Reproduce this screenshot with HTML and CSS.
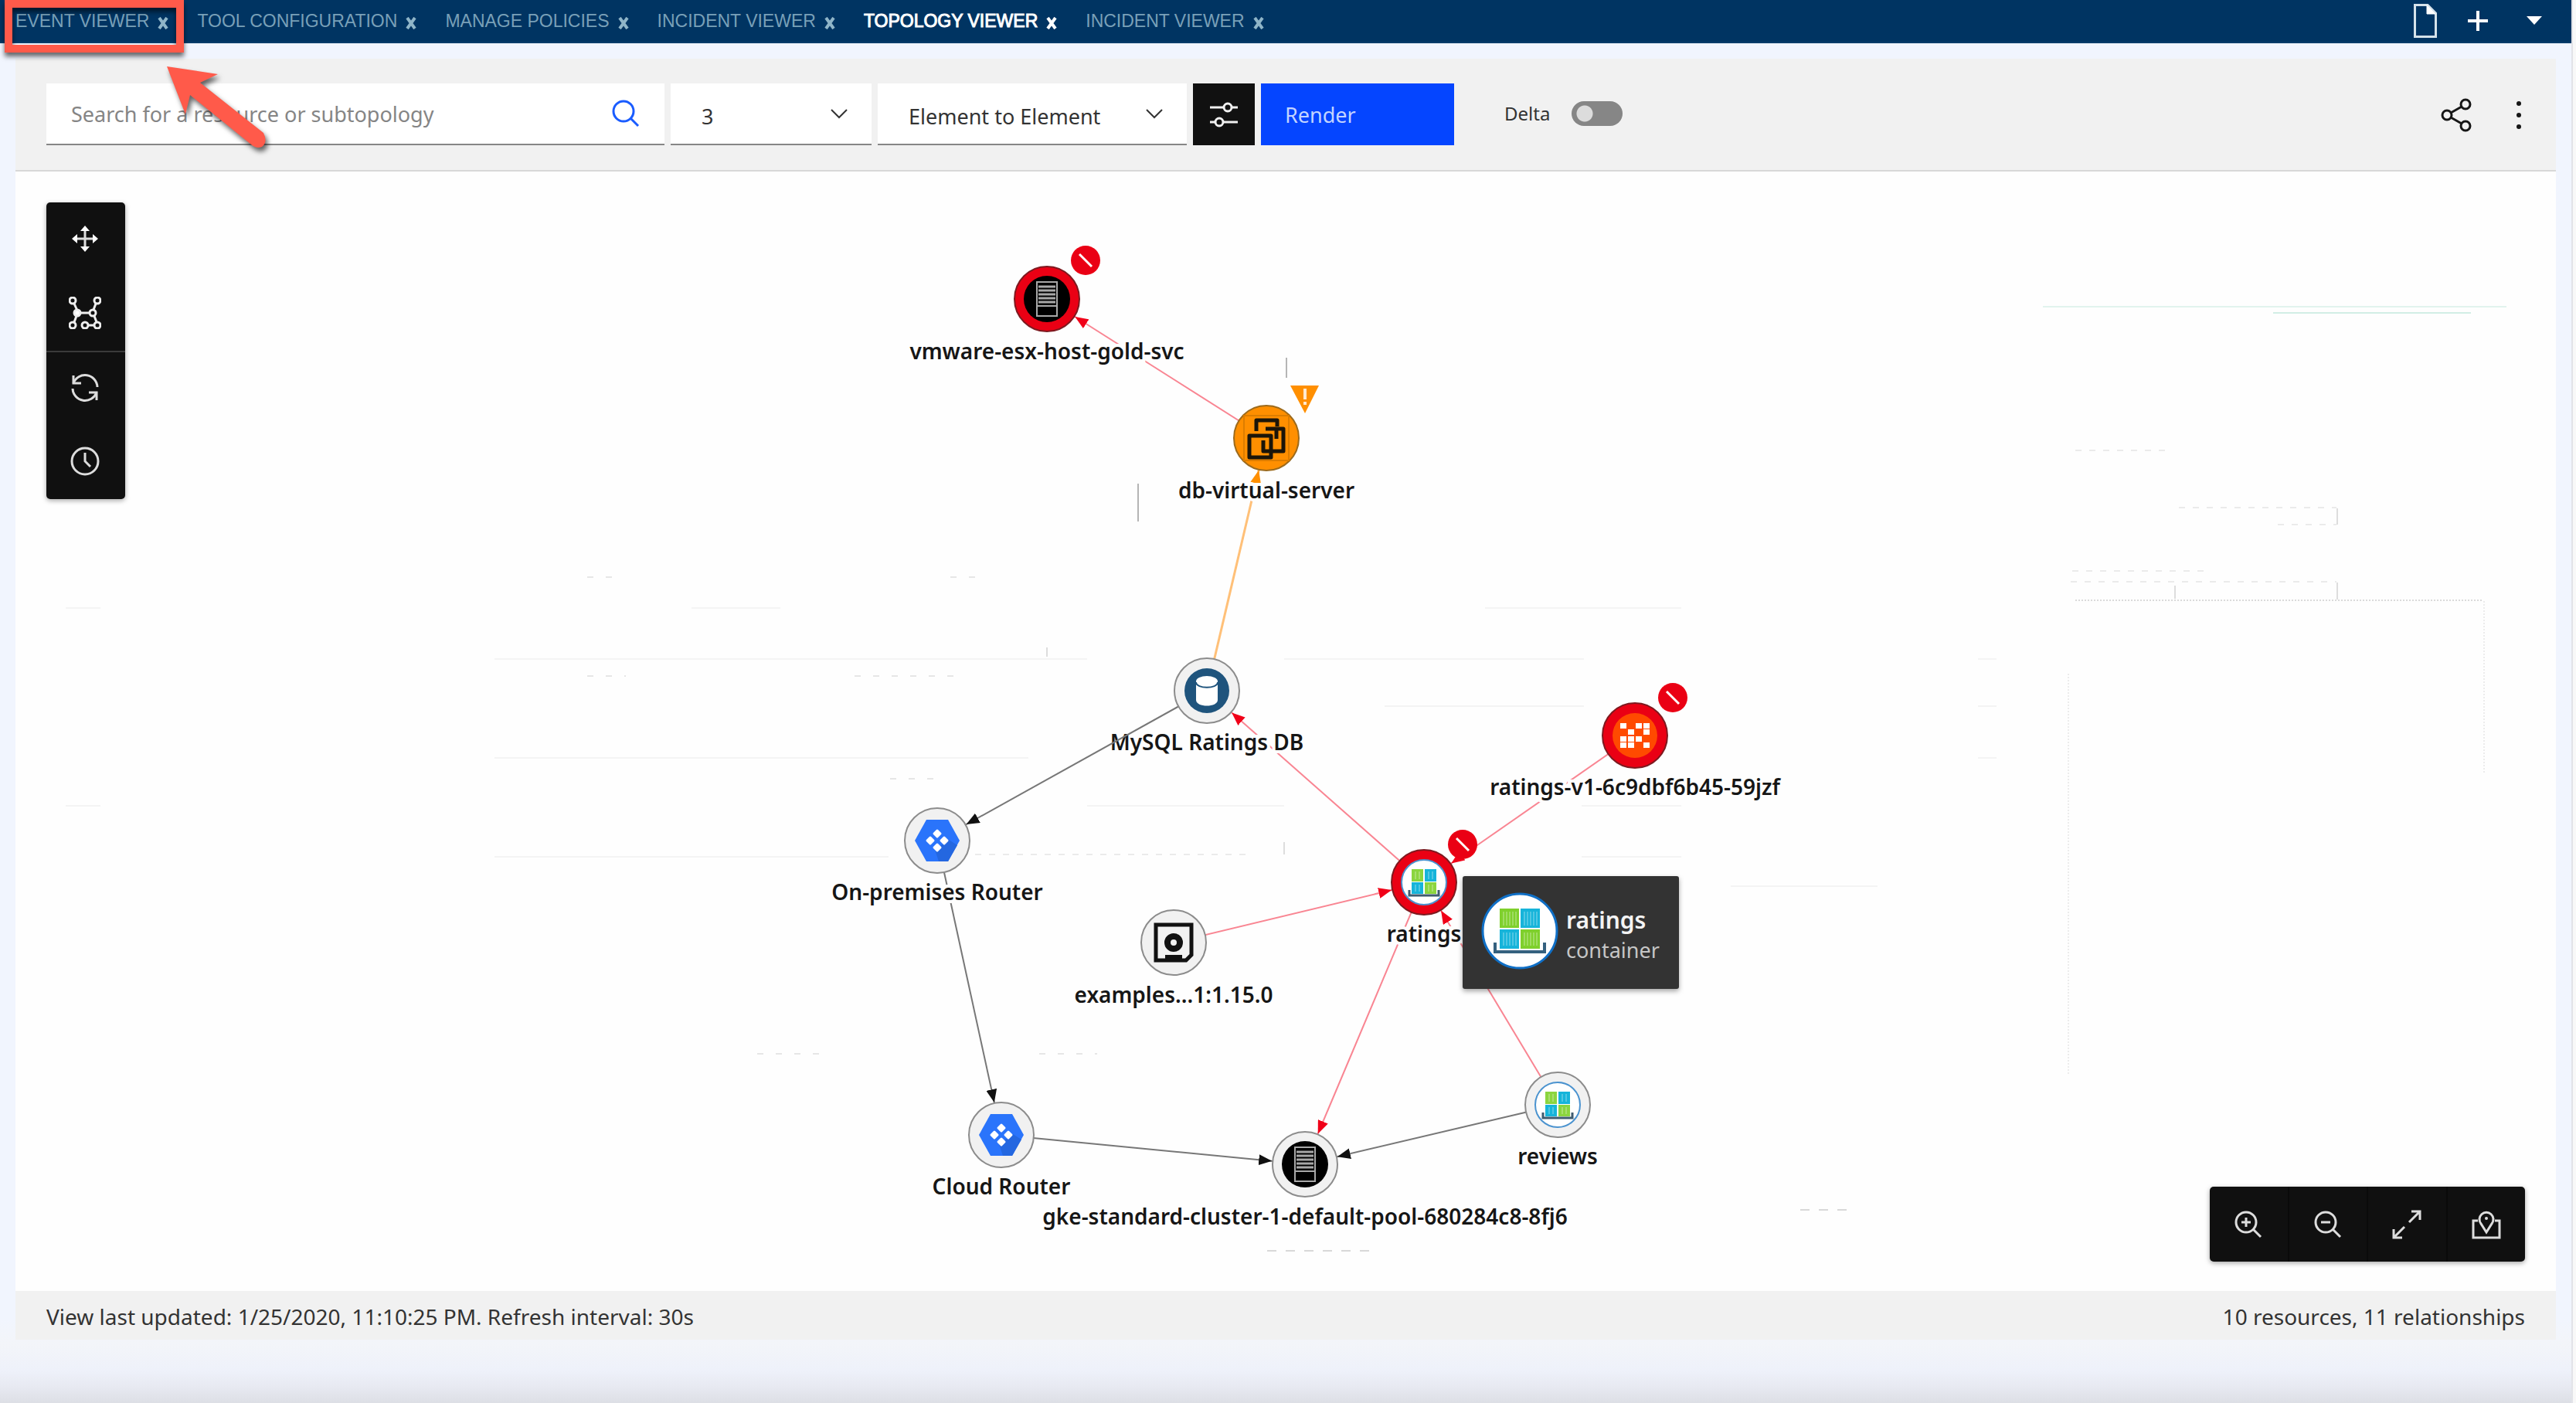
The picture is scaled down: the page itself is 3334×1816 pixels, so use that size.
FILE: index.html
```html
<!DOCTYPE html>
<html lang="en">
<head>
<meta charset="utf-8">
<title>Topology Viewer</title>
<link rel="stylesheet" href="styles.css">
</head>
<body>
<div class="app">
  <header class="topbar">
    <nav class="tabs" aria-label="Open pages">
      <div class="tab"><a href="#">EVENT VIEWER</a><button type="button" aria-label="Close"><svg class="x"><use href="#i-x"/></svg></button></div>
      <div class="tab"><a href="#">TOOL CONFIGURATION</a><button type="button" aria-label="Close"><svg class="x"><use href="#i-x"/></svg></button></div>
      <div class="tab"><a href="#">MANAGE POLICIES</a><button type="button" aria-label="Close"><svg class="x"><use href="#i-x"/></svg></button></div>
      <div class="tab"><a href="#">INCIDENT VIEWER</a><button type="button" aria-label="Close"><svg class="x"><use href="#i-x"/></svg></button></div>
      <div class="tab active"><a href="#">TOPOLOGY VIEWER</a><button type="button" aria-label="Close"><svg class="x"><use href="#i-x"/></svg></button></div>
      <div class="tab"><a href="#">INCIDENT VIEWER</a><button type="button" aria-label="Close"><svg class="x"><use href="#i-x"/></svg></button></div>
    </nav>
    <div class="top-actions">
      <button type="button" aria-label="New page"><svg width="30" height="44" viewBox="0 0 30 44" fill="none" stroke="#d5e2ea" stroke-width="3"><path d="M1.500 1.500H18L28.500 12V42.500H1.500Z"/><path d="M17 2V13H28Z" fill="#fff" stroke="#fff" stroke-width="1"/></svg></button>
      <button type="button" aria-label="Add"><svg width="26" height="26" viewBox="0 0 26 26" stroke="#fff" stroke-width="4"><path d="M13 0V26M0 13H26"/></svg></button>
      <button type="button" class="menu" aria-label="Menu"><svg width="20" height="12" viewBox="0 0 20 12"><path d="M0 0H20L10 11Z" fill="#fff"/></svg></button>
    </div>
  </header>

  <main class="panel">
    <form class="toolbar">
      <div class="search">
        <input type="text" aria-label="Search" placeholder="Search for a resource or subtopology">
        <svg width="36" height="36" viewBox="0 0 36 36" fill="none" stroke="#1a5cff" stroke-width="3"><circle cx="15" cy="15" r="13"/><path d="M24 24L34 34"/></svg>
      </div>
      <div class="select hops"><select aria-label="Hops"><option>3</option></select><svg class="chev"><use href="#i-chev"/></svg></div>
      <div class="select mode"><select aria-label="Mode"><option>Element to Element</option></select><svg class="chev"><use href="#i-chev"/></svg></div>
      <button type="button" class="filter" aria-label="Filters"><svg width="38" height="36" viewBox="0 0 38 36" fill="none" stroke="#f0f0f0" stroke-width="3"><path d="M1 9H19M30 9H37M1 28H8M19 28H37"/><circle cx="24" cy="9" r="5"/><circle cx="13" cy="28" r="5"/></svg></button>
      <button type="button" class="render">Render</button>
      <label class="delta">Delta <input type="checkbox"></label>
      <div class="tool-right">
        <button type="button" aria-label="Share"><svg width="40" height="44" viewBox="0 0 40 44" fill="none" stroke="#161616" stroke-width="3"><circle cx="32" cy="8" r="6"/><circle cx="8" cy="22" r="6"/><circle cx="32" cy="36" r="6"/><path d="M13 19L27 11M13 25L27 33"/></svg></button>
        <button type="button" aria-label="More"><svg width="8" height="38" viewBox="0 0 8 38" fill="#161616"><circle cx="4" cy="4" r="3"/><circle cx="4" cy="19" r="3"/><circle cx="4" cy="34" r="3"/></svg></button>
      </div>
    </form>

    <section class="canvas">
      <svg class="graph" viewBox="20 222 3288 1447">
        <defs>
          <symbol id="i-x" viewBox="0 0 16 16"><path d="M3 1L13 15M13 1L3 15" fill="none" stroke="currentColor" stroke-width="4"/></symbol>
          <symbol id="i-chev" viewBox="0 0 22 14"><path d="M1 2L11 12L21 2" fill="none" stroke="#333" stroke-width="2"/></symbol>
          <marker id="m-red" markerUnits="userSpaceOnUse" markerWidth="18" markerHeight="14" refX="60" refY="7" orient="auto"><path d="M0 0L17 7L0 14Z" fill="#f00018"/></marker>
          <marker id="m-dark" markerUnits="userSpaceOnUse" markerWidth="18" markerHeight="14" refX="60" refY="7" orient="auto"><path d="M0 0L17 7L0 14Z" fill="#111"/></marker>
          <marker id="m-orange" markerUnits="userSpaceOnUse" markerWidth="18" markerHeight="14" refX="60" refY="7" orient="auto"><path d="M0 0L17 7L0 14Z" fill="#ff8f00"/></marker>
          <g id="server"><circle r="30" fill="#000"/><g fill="none" stroke="#a8a8a8"><rect x="-13" y="-22" width="26" height="44" stroke-width="2"/><path d="M-11 -16H11M-11 -11H11M-11 -6H11M-11 -1H11M-11 4H11" stroke-width="3"/><path d="M-12 9H12" stroke-width="2"/></g></g>
          <g id="router"><path d="M-29 0L-14 -27H14L29 0L14 27H-14Z" fill="#2a74fb"/><path d="M15 -1L26 6L14 27H2L-3 12Z" fill="#2467e0"/><path d="M0 -13L4 -9L0 -5L-4 -9ZM0 13L4 9L0 5L-4 9ZM-13 0L-9 -4L-5 0L-9 4ZM13 0L9 -4L5 0L9 4Z" fill="#fff" stroke="#fff" stroke-width="3" stroke-linejoin="round"/></g>
          <g id="container"><circle r="29" fill="#fff" stroke="#4b93cf" stroke-width="2"/><path d="M-16 -17H-1V-1H-16ZM1 0H16V15H1Z" fill="#8bd53f"/><path d="M1 -17H16V-1H1ZM-16 0H-1V15H-16Z" fill="#16b4da"/><path d="M-11 -14V-4M-6 -14V-4M6 -14V-4M11 -14V-4M-11 3V12M-6 3V12M6 3V12M11 3V12" stroke="#fff" stroke-opacity=".5"/><path d="M-19 10V17H19V10" fill="none" stroke="#3f5c70" stroke-width="3"/></g>
          <g id="badge"><circle r="19" fill="#ea0014"/><path d="M-8 -8L8 8" stroke="#fff" stroke-width="3"/></g>
        </defs>

        <g class="traces">
          <path d="M2644 397H3244" stroke="#e2f4ee"/><path d="M2942 405H3198" stroke="#d2eee5"/>
          <path d="M2686 777H3212" stroke="#dadada" stroke-dasharray="2 2"/>
          <path d="M3215 778V1000M2677 872V1390" stroke="#ececec" stroke-dasharray="2 2"/>
          <path d="M2686 583H2810M2820 657H3024M2948 679H3024M2682 739H2860M2680 753H3024M1190 1106H1620" stroke="#ebebeb" stroke-dasharray="8 10"/>
          <path d="M3025 658V679M3025 754V776M2815 758V775M1355 838V850M1662 1090V1106" stroke="#ddd"/>
          <path d="M1665 463V489M1473 626V675" stroke="#b5b5b5"/>
          <path d="M640 853H1407M1662 853H2050M895 787H1010M1792 914H2050M1922 787H2176M640 981H1331M1407 1043H1662M640 1109H1150M85 787H130M85 1043H130M2047 1043H2176M2047 1109H2176M2560 853H2584M2560 914H2584M2560 981H2584M2240 1147H2430" stroke="#f4f4f4"/>
          <path d="M1640 1619H1775M2330 1566H2390" stroke="#d8d8d8" stroke-dasharray="12 12"/>
          <path d="M1345 1364H1420M980 1364H1060M760 747H800M1106 875H1240M1152 1008H1210M760 875H810M1230 747H1270" stroke="#e6e6e6" stroke-dasharray="8 16"/>
        </g>

        <g class="edges">
          <path class="red" d="M1639 567L1355 387"/>
          <path class="orange" d="M1562 894L1639 567"/>
          <path class="red" d="M1843 1142L1562 894"/>
          <path class="red" d="M2116 952L1843 1142"/>
          <path class="red" d="M1519 1220L1843 1142"/>
          <path class="red" d="M1843 1142L1689 1507"/>
          <path class="red" d="M2016 1430L1843 1142"/>
          <path class="dark" d="M1213 1088L1296 1469"/>
          <path class="dark" d="M1296 1469L1689 1507"/>
          <path class="dark" d="M2016 1430L1689 1507"/>
        </g>

        <g class="labels">
          <text x="1355" y="465">vmware-esx-host-gold-svc</text>
          <text x="1639" y="645">db-virtual-server</text>
          <text x="1562" y="971">MySQL Ratings DB</text>
          <text x="1213" y="1165">On-premises Router</text>
          <text x="1519" y="1298">examples...1:1.15.0</text>
          <text x="2116" y="1029">ratings-v1-6c9dbf6b45-59jzf</text>
          <text x="1843" y="1219">ratings</text>
          <text x="1296" y="1546">Cloud Router</text>
          <text x="1689" y="1585">gke-standard-cluster-1-default-pool-680284c8-8fj6</text>
          <text x="2016" y="1507">reviews</text>
        </g>
        <g class="edges"><path class="dark" d="M1562 894L1213 1088"/></g>

        <g class="nodes">
          <g transform="translate(1355 387)"><circle class="ring critical" r="42"/><use href="#server"/></g>
          <use href="#badge" x="1405" y="337"/>
          <g transform="translate(1639 567)"><circle class="ring warning" r="42"/><path d="M-29 -30V30M29 -30V30M-30 -29H30M-30 29H30" stroke="#dd7d00" stroke-width="2"/><g fill="none" stroke="#1b1509" stroke-width="5" stroke-linejoin="round"><path d="M-13 -9V-23H14V-15M-1 -12H22V17H-4V3M13 -11V1M-22 -3H6V25H-22Z"/></g></g>
          <path d="M1670 499H1707L1689 535Z" fill="#ff8f00"/><path d="M1689 503V517M1689 520V524" stroke="#ffe9cf" stroke-width="4"/>
          <g transform="translate(1562 894)"><circle class="ring" r="42"/><circle r="29" fill="#1f547d"/><path d="M-14 -12V12C-14 22 14 22 14 12V-12" fill="#fff"/><ellipse cy="-12" rx="14" ry="7" fill="#fff"/><path d="M-14 -11C-14 -2 14 -2 14 -11" fill="none" stroke="#1f547d" stroke-width="2"/></g>
          <g transform="translate(1213 1088)"><circle class="ring" r="42"/><use href="#router"/></g>
          <g transform="translate(1519 1220)"><circle class="ring" r="42"/><path d="M-23 -23H23V16L16 23H-23Z" fill="none" stroke="#111" stroke-width="5"/><path d="M-11 16H11V22H-11Z" fill="#111"/><circle r="8" fill="none" stroke="#111" stroke-width="8"/></g>
          <g transform="translate(2116 952)"><circle class="ring critical" r="42"/><circle r="29" fill="#ff4a00"/><path d="M-19 -16h8v7h-8zM1 -16h8v7h-8zM11 -16h8v7h-8zM-9 -8h8v7h-8zM11 -8h8v7h-8zM-19 1h8v7h-8zM-9 1h8v7h-8zM1 1h8v7h-8zM-19 9h8v7h-8zM-9 9h8v7h-8zM11 9h8v7h-8z" fill="#fff"/></g>
          <use href="#badge" x="2165" y="903"/>
          <g transform="translate(1843 1142)"><circle class="ring critical" r="42"/><use href="#container"/></g>
          <use href="#badge" x="1893" y="1093"/>
          <g transform="translate(1296 1469)"><circle class="ring" r="42"/><use href="#router"/></g>
          <g transform="translate(1689 1507)"><circle class="ring" r="42"/><use href="#server"/></g>
          <g transform="translate(2016 1430)"><circle class="ring" r="42"/><use href="#container"/></g>
        </g>

        <g class="tip">
          <rect x="1893" y="1134" width="280" height="146" rx="3"/>
          <g transform="translate(1967 1205)"><circle r="48" fill="#fff" stroke="#0f6fc6" stroke-width="3"/><path d="M-26 -29H-1V-4H-26ZM1 -2H26V23H1Z" fill="#7fd02c"/><path d="M1 -29H26V-4H1ZM-26 -2H-1V23H-26Z" fill="#16b4da"/><path d="M-21 -25V-7M-17 -25V-7M-13 -25V-7M-9 -25V-7M-5 -25V-7M6 -25V-7M10 -25V-7M14 -25V-7M18 -25V-7M22 -25V-7M-21 2V19M-17 2V19M-13 2V19M-9 2V19M-5 2V19M6 2V19M10 2V19M14 2V19M18 2V19M22 2V19" stroke="#fff" stroke-opacity=".5"/><path d="M-32 15V27H32V15" fill="none" stroke="#35617f" stroke-width="4"/></g>
          <text class="tip-name" x="2027" y="1202">ratings</text>
          <text class="tip-kind" x="2027" y="1240">container</text>
        </g>
      </svg>

      <div class="side-tools">
        <button type="button" aria-label="Move"><svg width="36" height="36" viewBox="0 0 36 36" fill="#fff" stroke="#ddd" stroke-width="3"><path d="M18 4V32M4 18H32"/><path d="M18 1L24 8H12ZM18 35L24 28H12ZM1 18L8 12V24ZM35 18L28 12V24Z" stroke="none"/></svg></button>
        <button type="button" aria-label="Layout"><svg width="42" height="42" viewBox="0 0 42 42" fill="none" stroke="#eee" stroke-width="3"><circle cx="5" cy="5" r="4"/><circle cx="37" cy="5" r="4"/><circle cx="5" cy="37" r="4"/><circle cx="21" cy="37" r="4"/><circle cx="37" cy="37" r="4"/><circle cx="31" cy="21" r="4"/><circle cx="11" cy="21" r="4" fill="#fff"/><path d="M7 9L11 18M35 9L32 17M10 25L7 33M33 25L36 33M15 21H27M25 37H33"/></svg></button>
        <button type="button" class="ruled" aria-label="Refresh"><svg width="36" height="36" viewBox="0 0 36 36" fill="none" stroke="#ddd" stroke-width="3"><path d="M3 12A16 16 0 0 1 34 17M33 24A16 16 0 0 1 2 19"/><path d="M3 2V12H13M33 34V24H23"/></svg></button>
        <button type="button" aria-label="History"><svg width="38" height="38" viewBox="0 0 38 38" fill="none" stroke="#ddd" stroke-width="3"><circle cx="19" cy="19" r="17"/><path d="M19 8V19L26 26"/></svg></button>
      </div>

      <div class="zoom-tools">
        <button type="button" aria-label="Zoom in"><svg width="36" height="36" viewBox="0 0 36 36" fill="none" stroke="#ddd" stroke-width="3"><circle cx="15" cy="15" r="13"/><path d="M24 24L34 34M15 9V21M9 15H21"/></svg></button>
        <button type="button" aria-label="Zoom out"><svg width="36" height="36" viewBox="0 0 36 36" fill="none" stroke="#ddd" stroke-width="3"><circle cx="15" cy="15" r="13"/><path d="M24 24L34 34M9 15H21"/></svg></button>
        <button type="button" aria-label="Fit"><svg width="38" height="38" viewBox="0 0 38 38" fill="none" stroke="#ddd" stroke-width="3"><path d="M25 2H36V13M36 2L22 16M13 36H2V25M2 36L16 22"/></svg></button>
        <button type="button" aria-label="Mini map"><svg width="38" height="38" viewBox="0 0 38 38" fill="none" stroke="#ddd" stroke-width="3"><path d="M8 14H2V36H36V14H30"/><path d="M19 29L12 18A9 9 0 1 1 26 18Z"/><circle cx="19" cy="11" r="2" fill="#ddd" stroke="none"/></svg></button>
      </div>
    </section>

    <footer class="status"><span>View last updated: 1/25/2020, 11:10:25 PM. Refresh interval: 30s</span><span>10 resources, 11 relationships</span></footer>
  </main>
</div>

<div class="callout"></div>
<svg class="pointer" width="150" height="124" viewBox="0 0 150 124"><path d="M8 6L74 16L51 27L133 92Q139 104 131 110Q124 113 117 107L38 43L32 68Z" fill="#ff5a4a"/></svg>
</body>
</html>
```
FILE: styles.css
```css
* { box-sizing: border-box; }
body {
  margin: 0;
  background: #f8f8f8;
  color: #161616;
  font-family: "Noto Sans", sans-serif;
  font-size: 27px;
}
button {
  display: flex;
  align-items: center;
  justify-content: center;
  padding: 0;
  border: 0;
  background: none;
  font: inherit;
}
svg { display: block; flex: none; }

.app {
  display: flex;
  flex-direction: column;
  min-height: 100vh;
  margin-right: 4px;
  border-right: 2px solid #e2e3e8;
  padding-bottom: 82px;
  background: linear-gradient(to top, #dddfe5 0, #e7e9f1 20px, #eef1fa 42px, #f3f5f9 76px, #f1f5fe 110px);
}

.topbar {
  display: flex;
  justify-content: space-between;
  align-items: center;
  height: 56px;
  padding: 0 38px 0 20px;
  background: #003462;
  border-bottom: 2px solid #063d6a;
}
.tabs { display: flex; gap: 36px; }
.tab {
  display: flex;
  align-items: center;
  gap: 10px;
  color: #79a0b8;
  font-family: "Liberation Sans", Arial, sans-serif;
  font-size: 23px;
}
.tab a { color: inherit; text-decoration: none; }
.tab button { color: #8fb5c8; padding-top: 6px; }
.tab.active, .tab.active button { color: #fff; }
.tab.active a { -webkit-text-stroke: 1px #fff; }
.x { width: 16px; height: 16px; }
.top-actions { display: flex; align-items: center; gap: 40px; }
.menu { margin-left: 10px; }

.panel {
  flex: 1;
  display: flex;
  flex-direction: column;
  margin: 20px 20px 0;
}
.toolbar {
  display: flex;
  align-items: center;
  gap: 8px;
  height: 146px;
  padding: 0 40px;
  background: #f1f1f1;
  border-bottom: 2px solid #d8d8d8;
}
.search, .select {
  position: relative;
  display: flex;
  align-items: center;
  height: 80px;
  background: #fff;
  border-bottom: 2px solid #868686;
}
.search { width: 800px; padding-right: 32px; }
.search input {
  flex: 1;
  height: 100%;
  padding: 0 32px;
  border: 0;
  background: none;
  font: inherit;
}
.search input::placeholder { color: #858585; opacity: 1; }
.hops { width: 260px; }
.mode { width: 400px; }
.select select {
  width: 100%;
  height: 100%;
  padding: 6px 40px 0;
  border: 0;
  background: none;
  appearance: none;
  color: #333;
  font: inherit;
}
.chev { position: absolute; right: 31px; width: 22px; height: 14px; }
.filter { width: 80px; height: 80px; background: #111; }
.render {
  justify-content: flex-start;
  width: 250px;
  height: 80px;
  padding-left: 31px;
  background: #0545ff;
  color: #c3d4ff;
}
.delta {
  display: flex;
  align-items: center;
  gap: 28px;
  margin-left: 57px;
  font-size: 24px;
  line-height: 32px;
  padding-bottom: 2px;
  color: #333;
}
.delta input {
  appearance: none;
  width: 66px;
  height: 32px;
  margin: 0;
  border-radius: 16px;
  background: radial-gradient(circle at 17px 16px, #dcdcdc 10px, transparent 11px) #868686;
}
.tool-right { display: flex; align-items: center; gap: 57px; margin-left: auto; padding: 2px 4px 0 0; }

.canvas { flex: 1; position: relative; background: #fefefe; }
.graph { width: 100%; height: auto; }
.traces path { fill: none; stroke-width: 2; }
.edges path { fill: none; stroke-width: 2; }
.edges .red { stroke: #f98592; marker-end: url(#m-red); }
.edges .orange { stroke: #ffc078; stroke-width: 3; marker-end: url(#m-orange); }
.edges .dark { stroke: #777; marker-end: url(#m-dark); }
.labels text {
  font-size: 28px;
  font-weight: 600;
  text-anchor: middle;
  fill: #161616;
  stroke: #fefefe;
  stroke-width: 8px;
  paint-order: stroke;
}
.ring { fill: #f1f1f1; stroke: #8c8c8c; stroke-width: 2; }
.ring.critical { fill: #ea0014; stroke: #7d1a20; }
.ring.warning { fill: #ff8f00; stroke: #9c6a1c; }
.tip rect { fill: #333; filter: drop-shadow(0 3px 3px rgba(0, 0, 0, .35)); }
.tip-name { fill: #f4f4f4; font-size: 30px; font-weight: 600; }
.tip-kind { fill: #c6c6c6; font-size: 27px; }

.side-tools, .zoom-tools {
  position: absolute;
  display: flex;
  background: #101010;
  border-radius: 5px;
  box-shadow: 0 2px 6px rgba(0, 0, 0, .35);
}
.side-tools { top: 40px; left: 40px; flex-direction: column; width: 102px; }
.side-tools button { height: 96px; padding: 0 2px 2px 0; }
.side-tools .ruled { border-top: 2px solid #3a3a3a; }
.zoom-tools { right: 40px; bottom: 38px; width: 408px; height: 97px; }
.zoom-tools button { flex: 1; }
.zoom-tools button + button { border-left: 2px solid #0a0a0a; }

.status {
  display: flex;
  justify-content: space-between;
  align-items: center;
  height: 63px;
  padding: 2px 40px 0;
  background: #f1f1f1;
  color: #333;
  font-size: 28px;
}

.callout {
  position: absolute;
  left: 6px;
  top: 0;
  width: 232px;
  height: 68px;
  border: 10px solid #ff5a4a;
  filter: drop-shadow(0 5px 3px rgba(0, 0, 0, .6));
}
.pointer { position: absolute; left: 208px; top: 80px; filter: drop-shadow(3px 5px 3px rgba(0, 0, 0, .6)); }
```
